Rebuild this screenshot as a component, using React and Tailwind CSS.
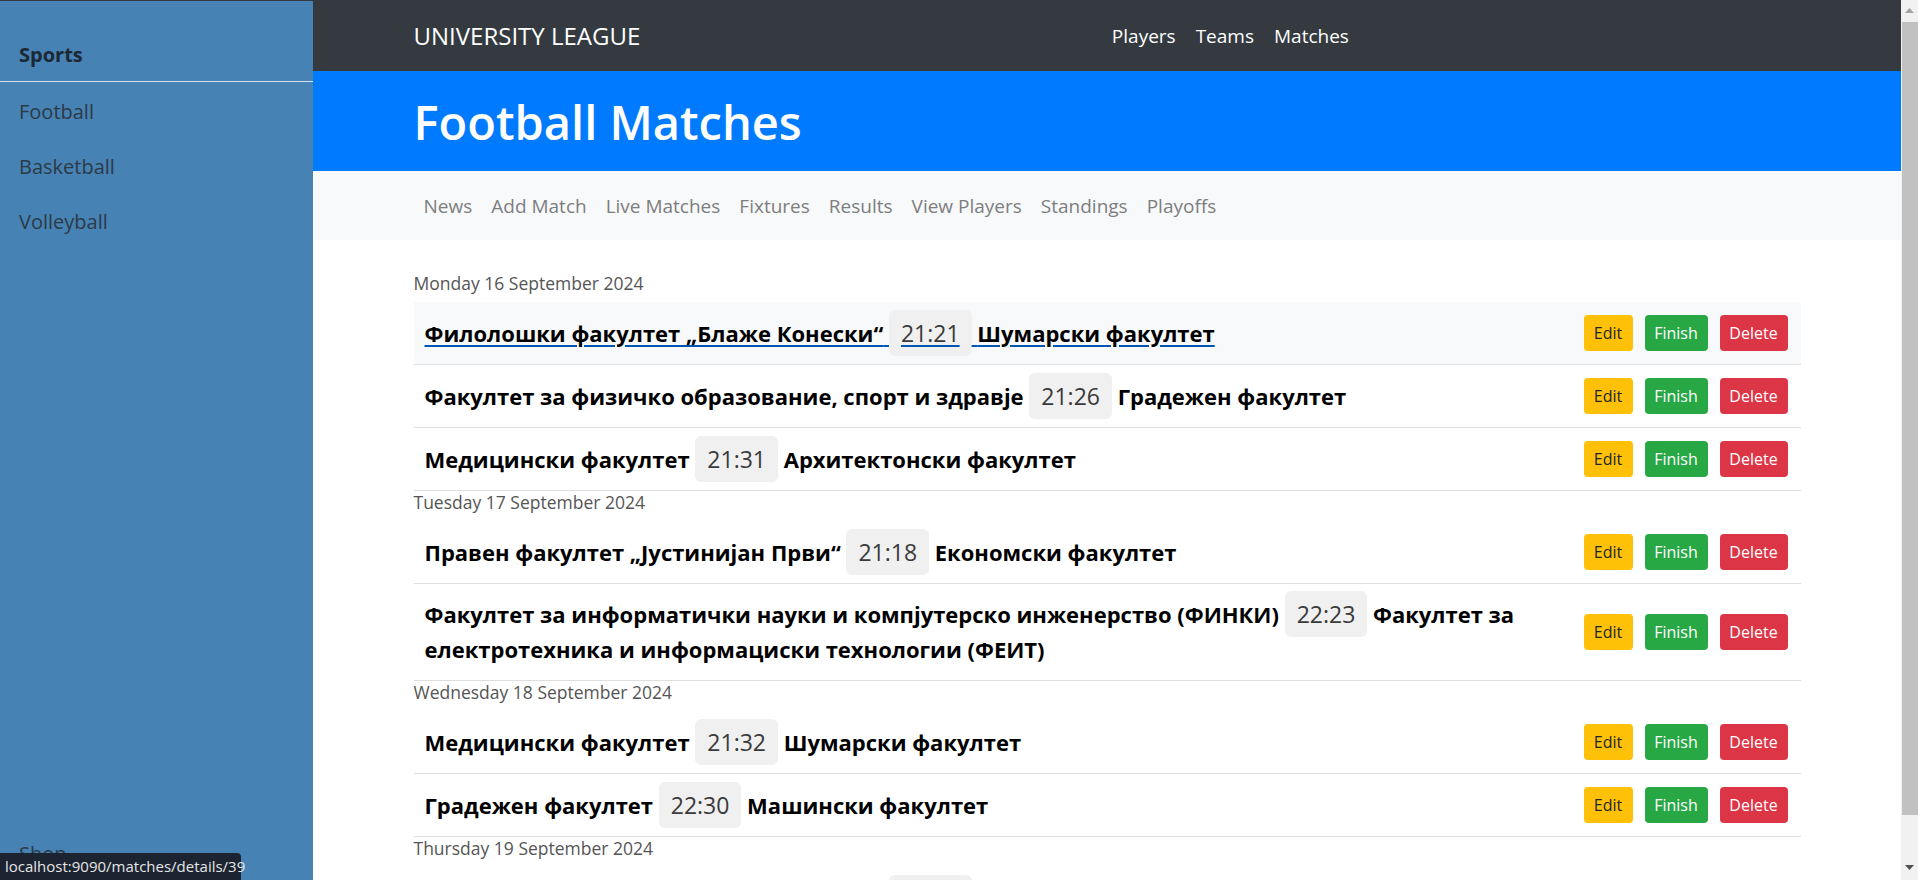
import React from 'react';

const days = [
  {
    label: 'Monday 16 September 2024',
    matches: [
      { home: 'Филолошки факултет „Блаже Конески“', score: '21:21', away: 'Шумарски факултет', hover: true },
      { home: 'Факултет за физичко образование, спорт и здравје', score: '21:26', away: 'Градежен факултет' },
      { home: 'Медицински факултет', score: '21:31', away: 'Архитектонски факултет' },
    ],
  },
  {
    label: 'Tuesday 17 September 2024',
    matches: [
      { home: 'Правен факултет „Јустинијан Први“', score: '21:18', away: 'Економски факултет' },
      {
        home: 'Факултет за информатички науки и компјутерско инженерство (ФИНКИ)',
        score: '22:23',
        away: 'Факултет за електротехника и информациски технологии (ФЕИТ)',
      },
    ],
  },
  {
    label: 'Wednesday 18 September 2024',
    matches: [
      { home: 'Медицински факултет', score: '21:32', away: 'Шумарски факултет' },
      { home: 'Градежен факултет', score: '22:30', away: 'Машински факултет' },
    ],
  },
  {
    label: 'Thursday 19 September 2024',
    matches: [{ home: 'Филолошки факултет „Блаже Конески“', score: '21:24', away: 'Економски факултет' }],
  },
];

const subNav = ['News', 'Add Match', 'Live Matches', 'Fixtures', 'Results', 'View Players', 'Standings', 'Playoffs'];

function MatchRow({ match }) {
  const inner = (
    <>
      <span className="text-black">{match.home}</span>{' '}
      <span className="rounded-[6px] bg-[#f0f0f0] px-[12px] py-[7px] text-[23px] font-normal leading-[28px] text-[#3a3a3a]">
        {match.score}
      </span>{' '}
      <span className="text-black">{match.away}</span>
    </>
  );

  return (
    <div
      className={`flex items-center justify-between border-b border-[#dedede] px-[11px] py-[13px] ${
        match.hover ? 'bg-[#f8f9fa]' : 'bg-white'
      }`}
    >
      <div className="min-w-0 flex-1 pr-[20px] text-[22px] font-bold leading-[35px]">
        {match.hover ? (
          <a href="#" className="underline decoration-[#0056b3] underline-offset-[3px]">
            {inner}
          </a>
        ) : (
          inner
        )}
      </div>
      <div className="mr-[2px] flex shrink-0 gap-[12px] text-[16px]">
        <button className="flex h-[36px] w-[49px] items-center justify-center rounded-[4px] bg-[#ffc107] text-[#212529]">
          Edit
        </button>
        <button className="flex h-[36px] w-[63px] items-center justify-center rounded-[4px] bg-[#28a745] text-white">
          Finish
        </button>
        <button className="flex h-[36px] w-[68px] items-center justify-center rounded-[4px] bg-[#dc3545] text-white">
          Delete
        </button>
      </div>
    </div>
  );
}

export default function App() {
  return (
    <div className="flex h-[880px] w-[1918px] overflow-hidden bg-white font-['Segoe_UI','Open_Sans',sans-serif]">
      {/* sidebar */}
      <aside className="relative flex w-[313px] shrink-0 flex-col border-t border-[#343a40] bg-[#4682b4]">
        <div className="flex h-[80px] items-end px-[19px] pb-[11px] text-[20px] font-bold leading-[30px] text-[#1c2833]">
          Sports
        </div>
        <div className="h-px bg-[#d9e3ec]" />
        <div className="pt-[2px] text-[20px] text-[#2c3a46]">
          {['Football', 'Basketball', 'Volleyball'].map((s) => (
            <div key={s} className="flex h-[55px] items-center px-[19px]">
              {s}
            </div>
          ))}
        </div>
        <div className="mt-auto px-[19px] pb-[11px] text-[20px] leading-[30px] text-[#2c3a46]">Shop</div>
        <div className="absolute bottom-0 left-0 flex h-[27px] w-[241px] items-center rounded-tr-[4px] bg-[#1c2331] px-[5px] text-[15px] text-[#e6e6e6]">
          localhost:9090/matches/details/39
        </div>
      </aside>

      {/* main */}
      <main className="flex min-w-0 flex-1 flex-col">
        <nav className="h-[71px] shrink-0 bg-[#343a40]">
          <div className="mx-auto flex h-full w-[1387px] items-center pt-[1px]">
            <span className="mr-[20px] text-[24px] text-white">UNIVERSITY LEAGUE</span>
            <div className="flex flex-1 justify-center text-[19px] text-white">
              <span className="px-[10px]">Players</span>
              <span className="px-[10px]">Teams</span>
              <span className="px-[10px]">Matches</span>
            </div>
          </div>
        </nav>

        <header className="h-[100px] shrink-0 bg-[#007bff]">
          <div className="mx-auto flex h-full w-[1387px] items-center pt-[3px]">
            <h1 className="text-[47px] font-semibold leading-none text-white">Football Matches</h1>
          </div>
        </header>

        <div className="h-[69px] shrink-0 bg-[#f8f9fa]">
          <div className="mx-auto flex h-full w-[1387px] items-center pt-[2px] text-[19px] text-[#7d7e7f]">
            {subNav.map((n) => (
              <span key={n} className="px-[9.5px] first:pl-[10px]">
                {n}
              </span>
            ))}
          </div>
        </div>

        <div className="mx-auto w-[1387px] pt-[32px]">
          {days.map((d) => (
            <section key={d.label}>
              <div className="mb-[8px] text-[17.5px] font-medium leading-[22px] text-[#555]">{d.label}</div>
              <div>
                {d.matches.map((m, i) => (
                  <MatchRow key={i} match={m} />
                ))}
              </div>
            </section>
          ))}
        </div>
      </main>

      {/* scrollbar */}
      <div className="flex w-[17px] shrink-0 flex-col bg-[#f1f1f1]">
        <div className="flex h-[22px] items-center justify-center">
          <svg width="9" height="6" viewBox="0 0 9 6">
            <path d="M4.5 0L9 5H0z" fill="#a3a3a3" />
          </svg>
        </div>
        <div className="ml-px h-[793px] bg-[#c1c1c1]" />
        <div className="flex flex-1 items-end justify-center pb-[9px]">
          <svg width="9" height="6" viewBox="0 0 9 6">
            <path d="M0 0H9L4.5 5z" fill="#505050" />
          </svg>
        </div>
      </div>
    </div>
  );
}
